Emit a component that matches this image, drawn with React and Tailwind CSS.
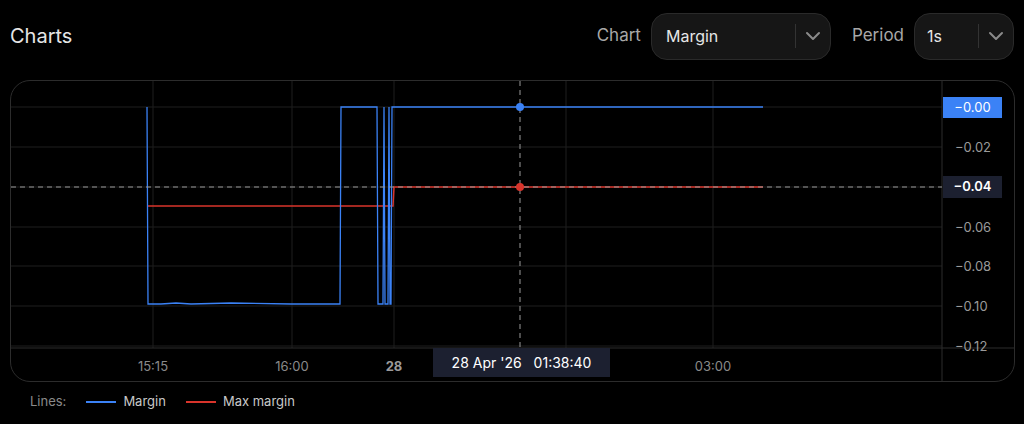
export default function App() {
  const ox = 10, oy = 80;
  const p = (pts) => pts.map(([x, y], i) => `${i ? 'L' : 'M'}${x - ox} ${y - oy}`).join(' ');
  const blue = p([[146,106],[147,303],[160,303],[175,302],[190,303],[230,302],[290,303],[339,303],[340,106],[376,106],[377,303],[382,303],[383,106],[384,303],[387,303],[388,106],[389,303],[390,303],[391,106],[762,106]]);
  const red = p([[147,205],[392,205],[393,186],[762,186]]);
  const ylabels = [['−0.02',146],['−0.06',226],['−0.08',265],['−0.10',305],['−0.12',345]];
  const vgrid = [152, 291, 393, 565, 712];
  const font = { fontFamily: 'Inter, "Liberation Sans", sans-serif' };
  return (
    <div className="w-[1024px] h-[424px] bg-black text-white overflow-hidden" style={font}>
      <div className="flex items-center justify-between pl-[10px] pr-[10px] pt-[13px] h-[68px] pb-[9px]">
        <div className="text-[20px] text-[#e6e6e6]">Charts</div>
        <div className="flex items-center">
          <span className="text-[17px] text-[#a8a8a8] mr-[10px]">Chart</span>
          <div className="flex items-center w-[180px] h-[47px] rounded-[16px] border border-[#2a2a2a] bg-[#161616]">
            <span className="flex-1 pl-[14px] text-[16px] text-[#e6e6e6]">Margin</span>
            <div className="w-px h-[24px] bg-[#333]" />
            <svg width="34" height="20" viewBox="0 0 34 20"><path d="M11 7l6 6 6-6" stroke="#8a8a8a" strokeWidth="2" fill="none" strokeLinecap="round" strokeLinejoin="round"/></svg>
          </div>
          <span className="text-[17px] text-[#a8a8a8] ml-[21px] mr-[10px]">Period</span>
          <div className="flex items-center w-[100px] h-[47px] rounded-[16px] border border-[#2a2a2a] bg-[#161616]">
            <span className="flex-1 pl-[12px] text-[16px] text-[#e6e6e6]">1s</span>
            <div className="w-px h-[24px] bg-[#333]" />
            <svg width="34" height="20" viewBox="0 0 34 20"><path d="M11 7l6 6 6-6" stroke="#8a8a8a" strokeWidth="2" fill="none" strokeLinecap="round" strokeLinejoin="round"/></svg>
          </div>
        </div>
      </div>
      <div className="mx-[10px] mt-[12px] h-[302px] w-[1005px] rounded-[20px] border border-[#2c2c2c] relative overflow-hidden">
        <svg width="1005" height="301" className="absolute left-0 top-0" style={font}>
          {[106,146,186,226,265,305,345].map(y => <line key={y} x1="0" x2={931} y1={y-oy} y2={y-oy} stroke="#1e1e1e" />)}
          {vgrid.map(x => <line key={x} x1={x-ox} x2={x-ox} y1="0" y2={267} stroke="#1e1e1e" />)}
          <line x1="931" x2="931" y1="0" y2="301" stroke="#2c2c2c" />
          <line x1="0" x2="1005" y1="267" y2="267" stroke="#2c2c2c" />
          <path d={red} stroke="#d9342b" strokeWidth="1.5" fill="none" />
          <path d={blue} stroke="#3b82f6" strokeWidth="1.3" fill="none" />
          <line x1={519-ox} x2={519-ox} y1="0" y2="267" stroke="#9a9a9a" strokeDasharray="5 4" />
          <line x1="0" x2="931" y1={186-oy} y2={186-oy} stroke="#9a9a9a" strokeDasharray="5 4" />
          <circle cx={519-ox} cy={106-oy} r="4" fill="#3b82f6" />
          <circle cx={519-ox} cy={186-oy} r="4" fill="#d9342b" />
          {ylabels.map(([t,y]) => <text key={t} x="944" y={y-oy+5} fontSize="13" fill="#9a9a9a">{t}</text>)}
          {[['15:15',152],['16:00',291],['03:00',712]].map(([t,x]) => <text key={t} x={x-ox} y="290" fontSize="13" fill="#8a8a8a" textAnchor="middle">{t}</text>)}
          <text x={393-ox} y="290" fontSize="13" fill="#9a9a9a" fontWeight="bold" textAnchor="middle">28</text>
        </svg>
        <div className="absolute left-[932px] top-[16px] w-[59px] h-[21px] bg-[#3b82f6] text-[13px] flex items-center justify-center text-white">−0.00</div>
        <div className="absolute left-[932px] top-[95px] w-[59px] h-[22px] bg-[#1c2030] text-[13px] flex items-center justify-center text-white font-semibold">−0.04</div>
        <div className="absolute left-[422px] top-[267px] w-[177px] h-[29px] bg-[#1c2030] text-[14px] flex items-center justify-center text-white gap-[12px]"><span>28 Apr '26</span><span>01:38:40</span></div>
      </div>
      <div className="flex items-center pl-[30px] mt-[10px] text-[13px]">
        <span className="text-[#8a8a8a]">Lines:</span>
        <span className="ml-[20px] w-[30px] h-[2px] bg-[#3b82f6]" />
        <span className="ml-[7px] text-[#c8c8c8]">Margin</span>
        <span className="ml-[20px] w-[30px] h-[2px] bg-[#d9342b]" />
        <span className="ml-[7px] text-[#c8c8c8]">Max margin</span>
      </div>
    </div>
  );
}
